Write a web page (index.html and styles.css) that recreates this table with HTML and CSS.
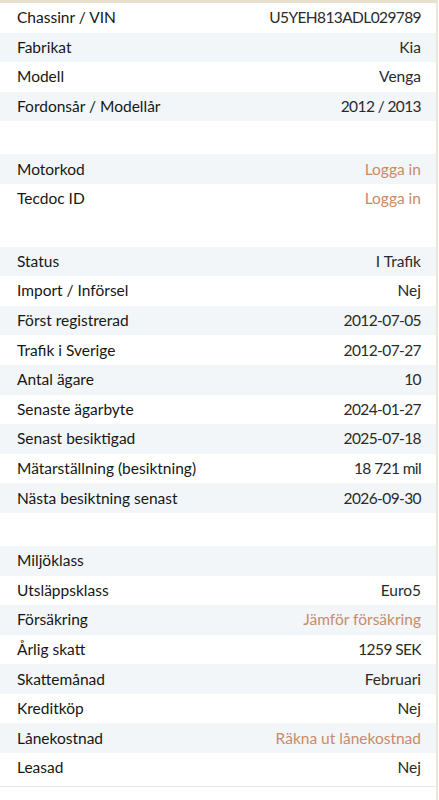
FILE: index.html
```html
<!DOCTYPE html>
<html lang="sv">
<head>
<meta charset="utf-8">
<link rel="stylesheet" href="styles.css">
</head>
<body>
<div class="page">
  <div class="section">
    <div class="row"><span class="label">Chassinr / VIN</span><span class="value num">U5YEH813ADL029789</span></div>
    <div class="row alt"><span class="label">Fabrikat</span><span class="value">Kia</span></div>
    <div class="row"><span class="label">Modell</span><span class="value">Venga</span></div>
    <div class="row alt"><span class="label">Fordonsår / Modellår</span><span class="value num">2012 / 2013</span></div>
  </div>
  <div class="section">
    <div class="row alt"><span class="label">Motorkod</span><span class="value link">Logga in</span></div>
    <div class="row"><span class="label">Tecdoc ID</span><span class="value link">Logga in</span></div>
  </div>
  <div class="section">
    <div class="row alt"><span class="label">Status</span><span class="value">I Trafik</span></div>
    <div class="row"><span class="label">Import / Införsel</span><span class="value">Nej</span></div>
    <div class="row alt"><span class="label">Först registrerad</span><span class="value num">2012-07-05</span></div>
    <div class="row"><span class="label">Trafik i Sverige</span><span class="value num">2012-07-27</span></div>
    <div class="row alt"><span class="label">Antal ägare</span><span class="value num">10</span></div>
    <div class="row"><span class="label">Senaste ägarbyte</span><span class="value num">2024-01-27</span></div>
    <div class="row alt"><span class="label">Senast besiktigad</span><span class="value num">2025-07-18</span></div>
    <div class="row"><span class="label">Mätarställning (besiktning)</span><span class="value num">18 721 mil</span></div>
    <div class="row alt"><span class="label">Nästa besiktning senast</span><span class="value num">2026-09-30</span></div>
  </div>
  <div class="section last">
    <div class="row alt"><span class="label">Miljöklass</span><span class="value"></span></div>
    <div class="row"><span class="label">Utsläppsklass</span><span class="value">Euro5</span></div>
    <div class="row alt"><span class="label">Försäkring</span><span class="value link">Jämför försäkring</span></div>
    <div class="row"><span class="label">Årlig skatt</span><span class="value num">1259 SEK</span></div>
    <div class="row alt"><span class="label">Skattemånad</span><span class="value">Februari</span></div>
    <div class="row"><span class="label">Kreditköp</span><span class="value">Nej</span></div>
    <div class="row alt"><span class="label">Lånekostnad</span><span class="value link">Räkna ut lånekostnad</span></div>
    <div class="row"><span class="label">Leasad</span><span class="value">Nej</span></div>
  </div>
</div>
</body>
</html>
```
FILE: styles.css
```css
html, body {
  margin: 0;
  padding: 0;
  background: #ffffff;
}
.page {
  width: 438px;
  height: 800px;
  box-sizing: border-box;
  border-top: 3px solid #e9dfcf;
  border-right: 2px solid #ede6dc;
  display: flex;
  flex-direction: column;
  gap: 33px;
  font-family: Lato, "Noto Sans", sans-serif;
  font-size: 15.5px;
}
.section {
  display: flex;
  flex-direction: column;
}
.section.last {
  border-bottom: 1px solid #e6e8ea;
  padding-bottom: 3px;
}
.row {
  height: 29.6px;
  display: flex;
  align-items: center;
  justify-content: space-between;
  padding: 0 15px 1px 17px;
  box-sizing: border-box;
}
.row.alt {
  background: #f3f6f8;
}
.label {
  color: #161616;
}
.value {
  color: #2a2a2a;
}
.value.num {
  letter-spacing: -0.6px;
}
.value.link {
  color: #c98a68;
}
```
